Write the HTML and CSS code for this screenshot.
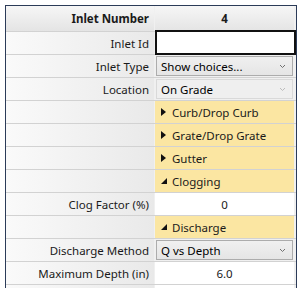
FILE: index.html
```html
<!DOCTYPE html>
<html lang="en">
  <head>
    <meta charset="UTF-8" />
    <title>Inlet Properties</title>
    <link rel="stylesheet" href="styles.css">
  </head>
  <body>
    <!-- Property grid -->
    <div class="grid">
      <div class="row header">
        <div class="label">Inlet Number</div>
        <div class="value center">4</div>
      </div>

      <div class="row">
        <div class="label">Inlet Id</div>
        <div class="value"><div class="input"></div></div>
      </div>

      <div class="row">
        <div class="label">Inlet Type</div>
        <div class="value">
          <div class="select">
            <span>Show choices...</span>
            <svg class="chev" width="7" height="5" viewBox="0 0 7 5"><polyline points="1,1 3.5,3.5 6,1" /></svg>
          </div>
        </div>
      </div>

      <div class="row">
        <div class="label">Location</div>
        <div class="value">
          <div class="select disabled">
            <span>On Grade</span>
            <svg class="chev" width="7" height="5" viewBox="0 0 7 5"><polyline points="1,1 3.5,3.5 6,1" /></svg>
          </div>
        </div>
      </div>

      <!-- Collapsible groups -->
      <div class="row">
        <div class="label"></div>
        <div class="value group">
          <svg class="tri" width="6" height="8" viewBox="0 0 6 8"><polygon points="0,0 5,4 0,8" /></svg>
          <span>Curb/Drop Curb</span>
        </div>
      </div>

      <div class="row">
        <div class="label"></div>
        <div class="value group">
          <svg class="tri" width="6" height="8" viewBox="0 0 6 8"><polygon points="0,0 5,4 0,8" /></svg>
          <span>Grate/Drop Grate</span>
        </div>
      </div>

      <div class="row">
        <div class="label"></div>
        <div class="value group">
          <svg class="tri" width="6" height="8" viewBox="0 0 6 8"><polygon points="0,0 5,4 0,8" /></svg>
          <span>Gutter</span>
        </div>
      </div>

      <div class="row">
        <div class="label"></div>
        <div class="value group">
          <svg class="tri" width="6" height="8" viewBox="0 0 6 8"><polygon points="6,1 6,7 0,7" /></svg>
          <span>Clogging</span>
        </div>
      </div>

      <div class="row">
        <div class="label">Clog Factor (%)</div>
        <div class="value center white">0</div>
      </div>

      <div class="row">
        <div class="label"></div>
        <div class="value group">
          <svg class="tri" width="6" height="8" viewBox="0 0 6 8"><polygon points="6,1 6,7 0,7" /></svg>
          <span>Discharge</span>
        </div>
      </div>

      <div class="row">
        <div class="label">Discharge Method</div>
        <div class="value">
          <div class="select">
            <span>Q vs Depth</span>
            <svg class="chev" width="7" height="5" viewBox="0 0 7 5"><polyline points="1,1 3.5,3.5 6,1" /></svg>
          </div>
        </div>
      </div>

      <div class="row">
        <div class="label">Maximum Depth (in)</div>
        <div class="value center white">6.0</div>
      </div>

      <div class="row last">
        <div class="label"></div>
        <div class="value white"></div>
      </div>
    </div>
  </body>
</html>
```

FILE: styles.css
```css
body {
  font-family: "Noto Sans", Arial, sans-serif;
  font-size: 11.5px;
  color: #1a1a1a;
  margin: 0;
  padding: 5px 0 0 5px;
  background: #ffffff;
  overflow: hidden;
}

/* Grid frame */
.grid {
  width: 290px;
  border: 1px solid #2b3b58;
  border-bottom: none;
  background: #f0f0f0;
}

.row {
  display: grid;
  grid-template-columns: 148px 1fr;
  column-gap: 1px;
  height: 22px;
  border-bottom: 1px solid #d2d2d2;
  padding-right: 2px;
}

.row.header {
  height: 25px;
  font-weight: bold;
}

.row.last {
  height: 3px;
  border-bottom: none;
}

/* Label column */
.label {
  display: flex;
  align-items: center;
  justify-content: flex-end;
  padding-right: 5px;
  background: linear-gradient(to right, #fafafa, #e9e9e9);
  white-space: nowrap;
}

.header .label,
.header .value {
  background: linear-gradient(to bottom, #f6f6f6, #e4e4e4);
}

/* Value column */
.value {
  display: flex;
  align-items: center;
  position: relative;
  min-width: 0;
}

.value.center {
  justify-content: center;
}

.value.white {
  background: #ffffff;
}

.value.group {
  background: #fbe6a2;
  padding-left: 6px;
  gap: 5px;
}

.tri {
  fill: #111111;
}

.input {
  position: absolute;
  top: -2px;
  bottom: -1px;
  left: 0;
  right: -2px;
  border: 2px solid #111111;
  background: #ffffff;
}

.select {
  flex: 1;
  height: 18px;
  margin: 0 1px;
  display: flex;
  align-items: center;
  justify-content: space-between;
  padding: 0 6px 0 4px;
  border: 1px solid #acacac;
  background: linear-gradient(to bottom, #f0f0f0, #e5e5e5);
  color: #000000;
}

.select.disabled {
  border-color: #d9d9d9;
  background: #efefef;
}

.chev {
  fill: none;
  stroke: #707070;
  stroke-width: 1;
}

.disabled .chev {
  stroke: #bcbcbc;
}
```
